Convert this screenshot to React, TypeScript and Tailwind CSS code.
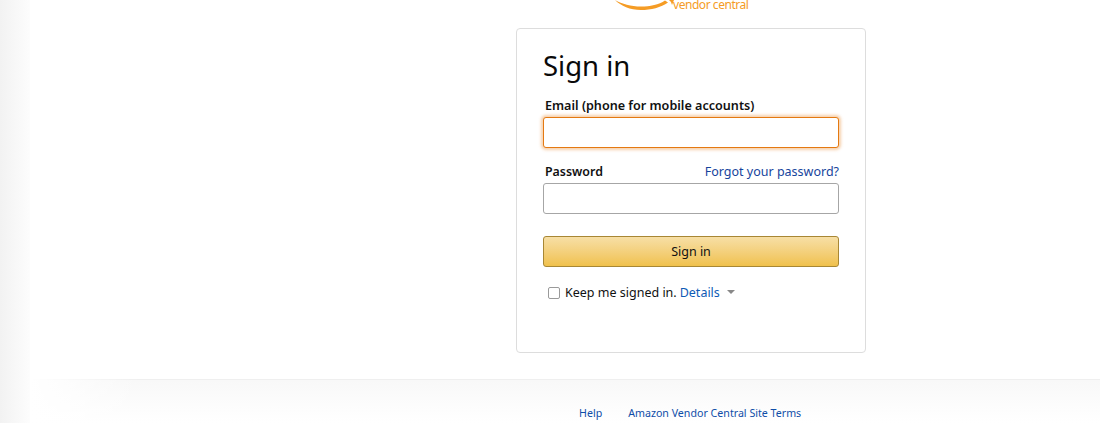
import React from 'react';

const AmazonSmile: React.FC = () => (
    <svg width="64" height="11" viewBox="0 0 64 11" fill="none" className="absolute left-[614px] top-0">
        <path d="M1 0C8 4 17 6.5 27 6.5C36 6.5 45 4.5 51 0.5L54 2.5C47 7.5 37 10 27 10C16 10 7 6 1 0Z" fill="#f59c25" />
        <path d="M55 0L60 0L58 5L57 2Z" fill="#f59c25" />
    </svg>
);

const App: React.FC = () => {
    return (
        <div className="flex h-[423px] w-[1100px] overflow-hidden bg-white font-['Noto_Sans',sans-serif] text-[#111]">
            <div className="h-full w-[30px] shrink-0 bg-gradient-to-r from-[#f2f2f2] to-[#fdfdfd]" />
            <div className="relative flex w-[1070px] flex-col">
                <div className="relative h-[28px] -ml-[30px]">
                    <AmazonSmile />
                    <span className="absolute left-[673px] -top-[2px] text-[12px] leading-[14px] tracking-[-0.45px] text-[#f59c25]">vendor central</span>
                </div>
                <main className="ml-[486px] h-[325px] w-[350px] rounded-[4px] border border-[#ddd] bg-white px-[26px] pt-[18px]">
                    <h1 className="text-[27.5px] leading-[38px] font-normal text-[#0a0a0a]">Sign in</h1>
                    <form>
                        <label htmlFor="email" className="mt-[13px] block pl-[2px] text-[12.6px] leading-[16px] font-semibold">
                            Email (phone for mobile accounts)
                        </label>
                        <input
                            id="email"
                            type="email"
                            className="mt-[3px] block h-[31px] w-[296px] rounded-[3px] border border-[#e47911] bg-white shadow-[0_0_3px_2px_rgba(228,121,17,0.35)] outline-none"
                        />
                        <div className="mt-[16px] flex items-center justify-between pl-[2px]">
                            <label htmlFor="password" className="text-[12.4px] leading-[16px] font-semibold">Password</label>
                            <a href="#" className="text-[12.5px] leading-[16px] text-[#16449c]">Forgot your password?</a>
                        </div>
                        <input
                            id="password"
                            type="password"
                            className="mt-[3px] block h-[31px] w-[296px] rounded-[3px] border border-[#a6a6a6] bg-white outline-none"
                        />
                        <button
                            type="button"
                            className="mt-[22px] block h-[31px] w-[296px] rounded-[3px] border border-[#a88734] bg-gradient-to-b from-[#f7dfa5] to-[#f0c14b] pt-px text-[12.5px] text-[#111]"
                        >
                            Sign in
                        </button>
                        <div className="mt-[18px] flex items-center pl-[5px] text-[12.5px] leading-[16px]">
                            <span className="h-[12px] w-[12px] rounded-[2px] border border-[#9a9a9a] bg-white" />
                            <span className="ml-[5px]">Keep me signed in.</span>
                            <a href="#" className="ml-[3px] text-[#0f5bb5]">Details</a>
                            <span className="ml-[7px] mb-[2px] h-0 w-0 border-x-[4px] border-t-[4px] border-x-transparent border-t-[#888]" />
                        </div>
                    </form>
                </main>
                <footer className="relative mt-[26px] flex-1 border-t border-[#efefef] bg-gradient-to-b from-[#f8f8f8] to-white pt-[25px]">
                    <div className="absolute -top-px left-0 h-[45px] w-[110px] bg-gradient-to-r from-white to-transparent" />
                    <div className="relative ml-[549px] flex gap-[26px] text-[10.65px] leading-[16px] text-[#0f4da8]">
                        <a href="#">Help</a>
                        <a href="#">Amazon Vendor Central Site Terms</a>
                    </div>
                </footer>
            </div>
        </div>
    );
};

export default App;
